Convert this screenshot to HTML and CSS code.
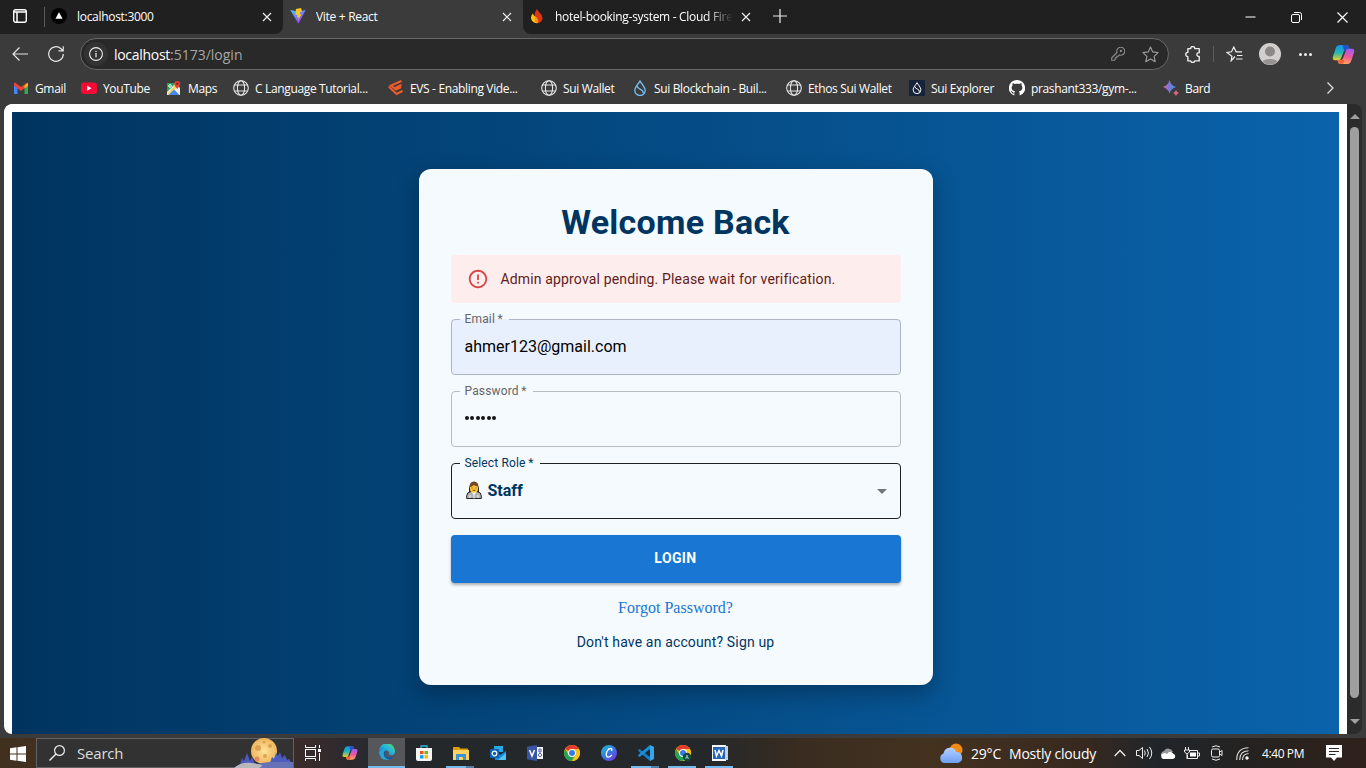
FILE: index.html
```html
<!DOCTYPE html>
<html lang="en">
<head>
<meta charset="utf-8">
<title>Vite + React</title>
<link rel="stylesheet" href="styles.css">
</head>
<body>
<svg class="defs" width="0" height="0">
  <defs>
    <linearGradient id="cpA" x1="0" y1="0" x2="0" y2="1"><stop offset="0" stop-color="#1793ea"/><stop offset=".5" stop-color="#21b7b6"/><stop offset="1" stop-color="#e9cf22"/></linearGradient>
    <linearGradient id="cpB" x1=".6" y1="0" x2=".4" y2="1"><stop offset="0" stop-color="#a05cf0"/><stop offset=".5" stop-color="#ee5799"/><stop offset="1" stop-color="#ffa85a"/></linearGradient>
    <linearGradient id="vite" x1="0" y1="0" x2=".7" y2="1"><stop offset="0" stop-color="#41d1ff"/><stop offset="1" stop-color="#a82dfa"/></linearGradient>
    <linearGradient id="bard"><stop offset="0" stop-color="#e0708a"/><stop offset=".4" stop-color="#8c70d8"/><stop offset="1" stop-color="#239dec"/></linearGradient>
    <linearGradient id="edge" x1="1" y1="0" x2="0" y2="1"><stop offset="0" stop-color="#62df54"/><stop offset=".45" stop-color="#25b8db"/><stop offset="1" stop-color="#1565bd"/></linearGradient>
    <linearGradient id="canva" x1="0" y1="0" x2="1" y2="1"><stop offset="0" stop-color="#17c4cf"/><stop offset=".5" stop-color="#3977e4"/><stop offset="1" stop-color="#822ce4"/></linearGradient>
    <linearGradient id="cloud" x1="0" y1="0" x2="0" y2="1"><stop offset="0" stop-color="#b4d0ff"/><stop offset="1" stop-color="#6d9ff2"/></linearGradient>
    <radialGradient id="moon"><stop offset="0" stop-color="#ffe39a"/><stop offset="1" stop-color="#eeb75c"/></radialGradient>
    <symbol id="globe" viewBox="0 0 16 16"><g fill="none" stroke="#e6e6e6" stroke-width="1.1"><circle cx="8" cy="8" r="7.3"/><ellipse cx="8" cy="8" rx="3.6" ry="7.3"/><path d="M1.5 5h13M1.5 11h13"/></g></symbol>
    <symbol id="x" viewBox="0 0 10 10"><path d="M1 1l8 8M9 1l-8 8" stroke="#eee" stroke-width="1.2"/></symbol>
    <symbol id="copilot" viewBox="0 0 24 22"><path d="M9 1h6q2 0 2.600 2l.6 2h-3q-2 0-2.700 2.200L9.500 15Q8.800 17 7 17H3Q0 17 1 13L4 4Q5 1 9 1z" fill="url(#cpA)"/><path d="M11 1h4q2 0 2.600 2l.9 3h-3q-2 0-2.700 2Z" fill="#1f54cc"/><path d="M15 21H9q-2 0-2.600-2l-.6-2h3q2 0 2.700-2.200L14.500 7Q15.200 5 17 5h4q3 0 2 4l-3 9q-1 3-5 3z" fill="url(#cpB)"/><path d="M9 21q-2 0-2.600-2l-.6-2h3q2 0 2.500-1.500L13 18q-1 3-4 3z" fill="#f4643a"/></symbol>
    <symbol id="chrome" viewBox="0 0 16 16"><circle cx="8" cy="8" r="8" fill="#fbc116"/><path d="M8 8L1.100 4A8 8 0 0 1 14.900 4z" fill="#e33b2e"/><path d="M1.100 4A8 8 0 0 0 8 16l3.400-6L8 8 4.600 10z" fill="#23a455"/><path d="M8 4h6.900A8 8 0 0 1 8 16l3.500-6z" fill="#fbc116"/><circle cx="8" cy="8" r="3.900" fill="#fff"/><circle cx="8" cy="8" r="3" fill="#347bea"/></symbol>
    <symbol id="drop" viewBox="0 0 16 16"><g fill="none" stroke="currentColor" stroke-width="1.300"><path d="M8 .9C9 3.200 13.200 7 13.200 10.400A5.200 5.200 0 0 1 8 15.500a5.200 5.200 0 0 1-5.200-5.100C2.800 7 7 3.200 8 .9z"/><path d="M5.200 6.100c0 3.700 6.500 2.500 6 7"/></g></symbol>
  </defs>
</svg>

<header class="tabs">
  <svg class="workspace" viewBox="0 0 14 14"><rect x=".7" y=".7" width="12.600" height="12.600" rx="2" fill="none" stroke="#fff" stroke-width="1.400"/><path d="M1 3h12M4 3v10" stroke="#fff" stroke-width="1.500"/></svg>
  <div class="tab first">
    <svg class="fav" viewBox="0 0 16 16"><circle cx="8" cy="8" r="8" fill="#000"/><path d="M8 4.300l3.600 6.400H4.400z" fill="#fff"/></svg>
    <span class="tab-title">localhost:3000</span><svg class="close"><use href="#x"/></svg>
  </div>
  <div class="tab active">
    <svg class="fav" viewBox="0 0 16 16"><path d="M.3 2L8.400 15.800 15.700 2 8 3.500z" fill="url(#vite)"/><path d="M11 0L5.900 1l-.4 6 2-.4-.5 3 1.700-.5-.7 3.300 3.600-6.300-2 .3.600-2.500 2-.4z" fill="#ffc61c"/></svg>
    <span class="tab-title">Vite + React</span><svg class="close"><use href="#x"/></svg>
  </div>
  <div class="tab third">
    <svg class="fav" viewBox="0 0 16 16"><path d="M8 1q1 2 2.500 3.500Q13.500 7 13.500 10A5.300 5.300 0 0 1 8 15.300Q5 15 6 8 5 5 8 1z" fill="#df3510"/><path d="M3.700 5.500q-3 4-.6 7.500Q5.200 15.700 9 15q-4-1-2.500-6Q5 7.500 3.700 5.500z" fill="#ffc20e"/><path d="M6.300 8.200q4 3 2.700 6.700-4-1-2.700-6.700z" fill="#ff9308"/></svg>
    <span class="tab-title fade">hotel-booking-system - Cloud Firestore</span><svg class="close"><use href="#x"/></svg>
  </div>
  <svg class="plus" viewBox="0 0 14 14"><path d="M7 0v14M0 7h14" stroke="#eee" stroke-width="1.200"/></svg>
  <div class="window-buttons">
    <svg viewBox="0 0 11 11"><path d="M.5 5h10" stroke="#fff"/></svg>
    <svg viewBox="0 0 11 11"><g fill="none" stroke="#fff"><rect x=".5" y="2.500" width="8" height="8" rx="1.500"/><path d="M3 .5h5.500a2 2 0 0 1 2 2V8"/></g></svg>
    <svg viewBox="0 0 11 11"><path d="M.5.5l10 10M10.500.5l-10 10" stroke="#fff" stroke-width="1.200"/></svg>
  </div>
</header>

<nav class="toolbar">
  <svg class="back" viewBox="0 0 16 14"><path d="M16 7H1M7.500 .5L1 7l6.500 6.500" fill="none" stroke="#e4e4e4" stroke-width="1.200"/></svg>
  <svg class="reload" viewBox="0 0 16 16"><path d="M15.300 8A7.300 7.300 0 1 1 13 2.700L15 4.500M15.200.3v4.500h-4.700" fill="none" stroke="#e4e4e4" stroke-width="1.200"/></svg>
  <div class="address">
    <span class="info"><svg viewBox="0 0 14 14"><circle cx="7" cy="7" r="6.400" fill="none" stroke="#eee" stroke-width="1.100"/><path d="M7 6v4.200M7 3.700v1.400" stroke="#eee" stroke-width="1.200"/></svg></span>
    <span class="url">localhost<i>:5173/login</i></span>
    <svg class="key" viewBox="0 0 14 14"><g fill="none" stroke="#8c8c8c" stroke-width="1.100"><path d="M6 5.500A4 4 0 1 1 8.500 8L7.300 9.200H5.900v1.600H4.300v1.600L3.400 13.300H.7v-2.500z"/><circle cx="10" cy="4" r=".6"/></g></svg>
    <svg class="star" viewBox="0 0 16 16"><path d="M8 1l2.100 4.600 5 .6-3.700 3.500 1 5L8 12.200l-4.400 2.500 1-5L.9 6.200l5-.6z" fill="none" stroke="#999" stroke-width="1.100" stroke-linejoin="round"/></svg>
  </div>
  <svg class="puzzle" viewBox="0 0 16 16"><path d="M5.300 2.500a2 2 0 0 1 4 0H13.400V6.300a1.800 1.800 0 1 0 0 3.500V14H9.200a2 2 0 0 1-3.900 0H2.700V10a2 2 0 0 1 0-4V2.500z" fill="none" stroke="#eee" stroke-width="1.300" stroke-linejoin="round"/></svg>
  <span class="divider"></span>
  <svg class="favorites" viewBox="0 0 17 16"><path d="M9 10.500l-3.800 4.300.7-4.600L1 6.500l4.500-.7L7.800 1l2.300 4.800H16M11 9.500h5.500M10 13h6.500" fill="none" stroke="#eee" stroke-width="1.200"/></svg>
  <svg class="avatar" viewBox="0 0 22 22"><circle cx="11" cy="11" r="11" fill="#d2d0ce"/><circle cx="11" cy="8.500" r="5" fill="#8c8886"/><path d="M3.800 19c0-4 14.400-4 14.400 0A11 11 0 0 1 3.800 19z" fill="#979391"/></svg>
  <span class="more"><b></b><b></b><b></b></span>
  <svg class="copilot"><use href="#copilot"/></svg>
</nav>

<nav class="bookmarks">
  <span><svg viewBox="0 0 16 16"><path d="M1 14V3l3.500 2.700V14z" fill="#4285f4"/><path d="M15 14V3l-3.500 2.700V14z" fill="#34a853"/><path d="M1 3l1-.6L8 7l6-4.600 1 .8v2.300L8 11 1 5.500z" fill="#ea4335"/><path d="M11.500 5.700L14 3.500l1-.4v3L11.500 8.500z" fill="#fbbc04"/></svg>Gmail</span>
  <span><svg viewBox="0 0 16 16"><rect y="2.500" width="16" height="11.500" rx="3" fill="#f60b37"/><path d="M6.200 5.700l4.300 2.500-4.300 2.500z" fill="#fff"/></svg>YouTube</span>
  <span><svg viewBox="0 0 16 16"><path d="M1 3h9l4 5v7H1z" fill="#f1f1f1"/><path d="M1 3h9L1 12z" fill="#24a35a"/><path d="M1 14L10 4l1 3-8 8z" fill="#f4d65b"/><path d="M2.500 15l5.500-5.500 5.500 5.500z" fill="#4387f1"/><path d="M11.200 9q-3-3-3-5.100a3 3 0 0 1 6 0q0 2.100-3 5.100z" fill="#e34235"/><circle cx="11.200" cy="3.700" r="1.200" fill="#8d211d"/><circle cx="4" cy="6" r="1.300" fill="none" stroke="#fff"/></svg>Maps</span>
  <span><svg><use href="#globe"/></svg>C Language Tutorial...</span>
  <span><svg viewBox="0 0 16 16"><g fill="none" stroke="#f15b2a" stroke-width="2"><path d="M13.500 1L3 5.500l5 4 5-2.500M13.500 5L6 8.500"/><path d="M.8 6.500L8.500 14l6-3"/></g></svg>EVS - Enabling Vide...</span>
  <span><svg><use href="#globe"/></svg>Sui Wallet</span>
  <span class="sui"><svg><use href="#drop"/></svg><em>Sui Blockchain - Buil...</em></span>
  <span><svg><use href="#globe"/></svg>Ethos Sui Wallet</span>
  <span><svg class="navy"><use href="#drop"/></svg>Sui Explorer</span>
  <span><svg viewBox="0 0 16 16"><path d="M8 0a8 8 0 0 0-2.600 15.600v-2.200c-2.200.5-2.700-.7-2.900-1.500-.2-.4-.6-.9-1-1.100 1.300-.4 1.800 1 2.100 1.300.6.900 1.300.7 1.900.4.100-.5.300-.9.600-1.100C3.500 11 2.600 9.800 2.600 7.600c0-1 .3-1.700.9-2.200-.1-.3-.3-1.100.1-2.100.7-.1 1.500.4 2.100.8 1.500-.4 3.100-.4 4.600 0 .6-.4 1.400-.9 2.100-.8.400 1 .2 1.800.1 2.100.6.500.9 1.200.9 2.200 0 2.200-.9 3.400-3.500 3.800.5.500.7 1.100.7 1.800v2.400A8 8 0 0 0 8 0z" fill="#fff"/></svg>prashant333/gym-...</span>
  <span><svg viewBox="0 0 16 16"><path d="M6.500 0q1.500 5.500 6.500 7-5 1.500-6.500 6.500Q5 8.500 0 7 5 5.500 6.500 0z" fill="url(#bard)"/><path d="M13 10q.8 2.200 3 3-2.200.8-3 3-.8-2.200-3-3 2.200-.8 3-3z" fill="#d96580"/></svg>Bard</span>
  <svg class="chevron" viewBox="0 0 7 12"><path d="M.5.500L6 6 .5 11.500" fill="none" stroke="#ddd" stroke-width="1.300"/></svg>
</nav>

<div class="viewport">
  <main class="page">
    <form class="card">
      <h1>Welcome Back</h1>
      <div class="alert">
        <svg viewBox="0 0 24 24"><path fill="#d84747" d="M11 15h2v2h-2zm0-8h2v6h-2zm.990-5C6.470 2 2 6.480 2 12s4.470 10 9.990 10C17.520 22 22 17.520 22 12S17.520 2 11.990 2M12 20c-4.420 0-8-3.580-8-8s3.580-8 8-8 8 3.580 8 8-3.580 8-8 8"/></svg>
        <span>Admin approval pending. Please wait for verification.</span>
      </div>
      <div class="field email"><label>Email&#8201;*</label><span>ahmer123@gmail.com</span></div>
      <div class="field"><label>Password&#8201;*</label><span class="dots"><b></b><b></b><b></b><b></b><b></b><b></b></span></div>
      <div class="field role"><label>Select Role&#8201;*</label>
        <svg class="person" viewBox="0 0 16 18"><path d="M.7 17.500v-2.700q0-3.500 4-4.100h6.600q4 .6 4 4.100v2.700z" fill="#b3b3b6" stroke="#222" stroke-width="1"/><path d="M5 10.700l3 3 3-3v-2H5z" fill="#fff"/><path d="M3 11q-.3-10 5-10.400Q13.300 1 13 11z" fill="#252525"/><rect x="4" y="3" width="8" height="8.700" rx="3.700" fill="#ffc431"/><path d="M3.600 6q0-5 4.400-5t4.400 5L11 5Q9 5.200 7.800 4 6 5.800 3.600 6z" fill="#75462a"/><path d="M6 6.500v1M10 6.500v1M6.700 9.300h2.600" stroke="#533" stroke-width=".9"/><path d="M8 13v4.500M4 14v3M12 14v3" stroke="#efefef"/></svg>
        <strong>Staff</strong><i class="caret"></i></div>
      <button type="button">LOGIN</button>
      <a class="forgot">Forgot Password?</a>
      <p class="signup">Don't have an account? Sign up</p>
    </form>
  </main>
  <aside class="scrollbar"><i class="up"></i><i class="thumb"></i><i class="down"></i></aside>
</div>

<footer class="taskbar">
  <svg class="start" viewBox="0 0 16 16"><path d="M0 2.300l6.500-1v6.200H0zM7.500 1.200L16 0v7.500H7.500zM0 8.500h6.500v6.200L0 13.700zM7.500 8.500H16V16l-8.500-1.200z" fill="#fff"/></svg>
  <div class="search">
    <svg class="lens" viewBox="0 0 16 16"><circle cx="10.500" cy="5.500" r="4.900" fill="none" stroke="#eee" stroke-width="1.200"/><path d="M7 9L.5 15.500" stroke="#eee" stroke-width="1.400"/></svg>
    <span>Search</span>
    <svg class="scene" viewBox="0 0 60 30"><circle cx="30" cy="13" r="13" fill="url(#moon)"/><g fill="#dda153"><circle cx="24" cy="10" r="3"/><circle cx="36" cy="8" r="2"/><circle cx="31" cy="18" r="2"/><circle cx="30" cy="4" r="1.500"/><circle cx="23" cy="21" r="2.500" fill="#e58a67"/></g><path d="M6 27l2-7 2 3 3-8 3 8 2-4 4 9zM36 25l2-6 2 2 2-6 2 3 2-4 2 6 3-3 2 5 2-1 3 5z" fill="#4c5bc0"/><path d="M0 30q9-8 23-4 12-3 36-2v6z" fill="#6572b6"/><path d="M0 30q9-8 23-4 9 1 2 4z" fill="#b9b9bd"/></svg>
  </div>
  <div class="apps">
    <span><svg viewBox="0 0 16 16"><g fill="none" stroke="#fff"><path d="M.5 0v2.500h10V0M.5 16v-2.500h10V16"/><rect x=".5" y="4.500" width="10" height="7"/><path d="M14.500 0v3M14.500 8v8"/></g><path d="M13 4h3v3h-3z" fill="#fff"/></svg></span>
    <span><svg><use href="#copilot"/></svg></span>
    <span class="current"><svg viewBox="0 0 16 16"><path d="M0 8A8 8 0 0 1 16 6.500c.5 4-3 5.500-5.500 4.500-1.500-.7-.2-1.300-.5-2.800C9.500 6 4 5 0 9z" fill="url(#edge)"/><path d="M0 8q4-4 8-2-3 1-3 4 0 4.500 6 5.300Q1 18 0 8z" fill="#2aa3d8"/><path d="M7.500 6q-3 1-2.800 4 .5 5 6.300 5.400 2.500-1 3.500-3-8 2.500-8.500-3 0-2 1.500-3.400z" fill="#1559a4"/></svg></span>
    <span><svg viewBox="0 0 16 16"><path d="M5 4V1h6v3" fill="none" stroke="#35aee4" stroke-width="1.300"/><path d="M0 3h16v11q0 2-2 2H2q-2 0-2-2z" fill="#f5f5f5"/><path d="M4 6h3.500v3.200H4z" fill="#f15123"/><path d="M8.500 6H12v3.200H8.500z" fill="#7eb900"/><path d="M4 10.200h3.500v3.300H4z" fill="#00a3ee"/><path d="M8.500 10.200H12v3.300H8.500z" fill="#ffb800"/></svg></span>
    <span class="open stack"><svg viewBox="0 0 16 16"><path d="M0 2h6l1.500 1.500H15V7H0z" fill="#dd9b09"/><path d="M0 5h16v10H0z" fill="#ffd45d"/><path d="M3 15V9h10v6h-3v-3H6v3z" fill="#3d92d8"/></svg></span>
    <span><svg viewBox="0 0 16 16"><path d="M4 1h9v6H4z" fill="#27a9e8"/><path d="M4 6l6 4 6-4v8q0 1-1 1H5z" fill="#1688db"/><path d="M8 15l8-7v6q0 1-1 1z" fill="#53c4f5"/><rect y="4" width="9" height="9" rx="1" fill="#0763b6"/><circle cx="4.500" cy="8.500" r="2.300" fill="none" stroke="#fff" stroke-width="1.200"/></svg></span>
    <span><svg viewBox="0 0 16 16"><path d="M8 2h8v12H8z" fill="#f4f4fa"/><path d="M0 1.700L10 0v16L0 14.300z" fill="#3855a4"/><path d="M2.500 5L5 11l2.500-6" fill="none" stroke="#fff" stroke-width="1.500"/><path d="M12 4h2v3h-2zM11 10l2-2 2 2-2 2z" fill="none" stroke="#5262a8"/></svg></span>
    <span><svg><use href="#chrome"/></svg></span>
    <span><svg viewBox="0 0 16 16"><circle cx="8" cy="8" r="8" fill="url(#canva)"/><path d="M10.500 6q1-2.500-.8-2.500C6.500 3.500 5 8 5.300 10.200c.4 2.800 3.700 2.500 5.500-.3" fill="none" stroke="#fff" stroke-width="1.300"/></svg></span>
    <span class="open stack"><svg viewBox="0 0 16 16"><path d="M0 5.200L1.500 4 12 12v4L1 6.700z" fill="#147dc9"/><path d="M0 10.800L1.500 12 12 4V0L1 9.300z" fill="#1690df"/><path d="M12 0l4 2v12l-4 2z" fill="#35a7ef"/></svg></span>
    <span class="open"><svg viewBox="0 0 16 16"><use href="#chrome"/><circle cx="12" cy="12" r="4.200" fill="#10483b"/><path d="M10.500 14L12 10l1.500 4M11 12.800h2" fill="none" stroke="#bde0d4" stroke-width=".7"/></svg></span>
    <span class="open"><svg viewBox="0 0 16 16"><path d="M0 0h14v16H0z" fill="#f4f7fb"/><path d="M13 1h3v14h-3z" fill="#bfd3ed"/><path d="M1 2h12v12H1z" fill="#2765b5"/><path d="M3 5l1.500 6L7 5.500 9.500 11 11 5" fill="none" stroke="#fff" stroke-width="1.500"/></svg></span>
  </div>
  <div class="tray">
    <svg class="weather" viewBox="0 0 25 20"><circle cx="17" cy="7" r="6.500" fill="#f38c14"/><path d="M5 20a5 5 0 0 1-.5-9.500A6.800 6.800 0 0 1 17.500 9 5.600 5.600 0 0 1 19 20z" fill="url(#cloud)"/></svg>
    <span class="temp">29°C</span><span class="sky">Mostly cloudy</span>
    <svg class="up-arrow" viewBox="0 0 12 8"><path d="M.7 7L6 1.500 11.300 7" fill="none" stroke="#eee" stroke-width="1.300"/></svg>
    <svg class="sound" viewBox="0 0 17 14"><g fill="none" stroke="#eee"><path d="M.5 4.500h2.500L6.500 1.500v11L3 9.500H.5zM8.500 4.500q1.500 2.500 0 5M11 3q3 4 0 8M13.500 1q4.500 6 0 12"/></g></svg>
    <svg class="onedrive" viewBox="0 0 16 11"><path d="M1 8a4 4 0 0 1 3-5 5 5 0 0 1 9 1z" fill="#999"/><path d="M3 11a3 3 0 0 1 0-5.500q2-1 4 .5 3-4 6-.5a2.800 2.800 0 0 1 0 5.500z" fill="#fff"/></svg>
    <svg class="battery" viewBox="0 0 16 12"><g fill="none" stroke="#eee"><path d="M6 3.500h7.500v8h-10V8M14 6h1.500v3H14M1.500 0v3M4.500 0v3M.5 3h5v2l-2.500 2L.5 5zM3 7v5"/></g><path d="M6 5.500h6v4H6z" fill="#fff"/></svg>
    <svg class="meet" viewBox="0 0 12 16"><g fill="none" stroke="#eee"><rect x=".5" y="4" width="8" height="8" rx="1.500"/><path d="M8.500 7l2.500-1.500v5L8.500 9M1 2q4-2.500 8 0M1 14q4 2.500 8 0"/></g></svg>
    <svg class="wifi" viewBox="0 0 13 13"><g fill="none" stroke="#ddd" stroke-width="1.100"><path d="M.7 13Q.7 1 12.500.7M3.700 13Q3.700 4 12.500 3.700M6.500 13Q6.500 7 12.500 6.500"/></g><circle cx="11" cy="11" r="1.700" fill="#fff"/></svg>
    <span class="clock">4:40 PM</span>
    <svg class="notice" viewBox="0 0 16 16"><path d="M0 0h16v12.500h-5L8 16l-3-3.500H0z" fill="#fff"/><path d="M3 3.500h10M3 6.500h10M3 9.500h6.500" stroke="#302620"/></svg>
  </div>
</footer>
</body>
</html>
```
FILE: styles.css
```css
* { box-sizing: border-box; }
body { margin: 0; width: 1366px; height: 768px; overflow: hidden; background: #3b3b3b; color: #fff; font-family: "Open Sans", "Noto Sans", sans-serif; font-size: 12px; display: flex; flex-direction: column; }
svg { display: block; flex: none; }
.defs { position: absolute; }

.tabs { height: 34px; flex: none; display: flex; align-items: center; background: #3b3b3b; position: relative; }
.tabs::before { content: ""; position: absolute; inset: 0 1083px 0 0; background: #202020; border-bottom-right-radius: 8px; }
.workspace { width: 14px; height: 14px; margin: -2px 0 0 13px; position: relative; }
.tab { height: 34px; display: flex; align-items: center; position: relative; padding-bottom: 2px; letter-spacing: -.3px; }
.first { width: 239px; margin-left: 17px; padding-left: 7px; }
.first::before { content: ""; width: 1px; height: 20px; background: #5a5a5a; position: absolute; left: 0; top: 7px; }
.active { width: 240px; background: #3b3b3b; border-radius: 8px 8px 0 0; padding-left: 7px; }
.third { width: 239px; background: #202020; border-bottom-left-radius: 8px; padding-left: 6px; }
.fav { width: 16px; height: 16px; margin-right: 10px; }
.third .fav { margin-right: 10px; }
.tab-title { flex: 1; white-space: nowrap; overflow: hidden; }
.fade { -webkit-mask-image: linear-gradient(90deg, #000 85%, transparent); mask-image: linear-gradient(90deg, #000 85%, transparent); }
.close { width: 10px; height: 10px; margin: 2px 11px 0 8px; }
.plus { width: 14px; height: 14px; padding: 0; }
.tabs .plus { box-sizing: content-box; padding: 9px 0 11px 11px; background: #202020; border-left: 0; }
.window-buttons { flex: 1; height: 34px; background: #202020; display: flex; align-items: center; justify-content: flex-end; gap: 35px; padding-right: 18px; }
.window-buttons svg { width: 11px; height: 11px; }

.toolbar { height: 40px; flex: none; display: flex; align-items: center; }
.back { width: 16px; height: 14px; margin-left: 12px; }
.reload { width: 16px; height: 16px; margin-left: 20px; }
.address { width: 1089px; height: 32px; margin-left: 16px; border: 1px solid #686868; border-radius: 16px; background: #292929; display: flex; align-items: center; }
.info { width: 24px; height: 24px; border-radius: 50%; background: #333; margin-left: 3px; display: grid; place-items: center; }
.info svg { width: 14px; height: 14px; }
.url { flex: 1; margin-left: 6px; font-size: 14px; letter-spacing: -.3px; }
.url i { color: #a6a6a6; font-style: normal; letter-spacing: 0; }
.key { width: 14px; height: 14px; margin-right: 17px; }
.star { width: 17px; height: 17px; margin-right: 9px; }
.puzzle { width: 17px; height: 17px; margin-left: 16px; }
.divider { width: 1px; height: 16px; background: #5c5c5c; margin-left: 11px; }
.favorites { width: 17px; height: 16px; margin-left: 12px; }
.avatar { width: 22px; height: 22px; margin-left: 16px; }
.more { display: flex; gap: 2px; margin-left: 18px; }
.more b { width: 3px; height: 3px; border-radius: 50%; background: #eee; }
.toolbar .copilot { width: 23px; height: 21px; margin-left: 20px; }

.bookmarks { height: 30px; flex: none; display: grid; grid-template-columns: 68px 85px 67px 155px 153px 91px 154px 123px 100px 154px 164px 7px; align-items: center; padding: 0 0 2px 13px; letter-spacing: -.35px; }
.bookmarks > span { display: flex; align-items: center; gap: 6px; white-space: nowrap; }
.bookmarks > span svg { width: 16px; height: 16px; }
.sui { color: #73bdf0; }
.sui em { color: #fff; font-style: normal; }
.navy { background: #172338; padding: 2px; }
.chevron { width: 7px; height: 12px; }

.viewport { height: 630px; flex: none; display: flex; margin-left: 4px; width: 1358px; background: #2b2b2b; border-radius: 8px; overflow: hidden; }
.page { width: 1343px; border: solid #fff; border-width: 8px 8px 0; background: linear-gradient(to right, #00345f, #0a63ab) padding-box; border-top-left-radius: 8px; display: flex; justify-content: center; align-items: flex-start; padding-top: 57px; }
.scrollbar { width: 15px; display: flex; flex-direction: column; align-items: center; }
.scrollbar i { display: block; }
.up { border: solid transparent; border-width: 0 5px 5px; border-bottom-color: #9f9f9f; margin-top: 10px; }
.thumb { width: 9px; height: 571px; border-radius: 5px; background: #9f9f9f; margin-top: 8px; }
.down { border: solid transparent; border-width: 5px 5px 0; border-top-color: #9f9f9f; margin-top: 21px; }

.card { width: 514px; height: 516px; padding: 32px; border-radius: 12px; background: #f5faff; box-shadow: 0 8px 24px rgba(0,0,0,.3); font-family: Roboto, sans-serif; color: #003366; display: flex; flex-direction: column; }
h1 { margin: 0 0 12px; font-size: 34px; line-height: 42px; text-align: center; font-weight: 700; letter-spacing: .25px; color: #00355f; }
.alert { height: 48px; flex: none; border-radius: 4px; background: #fdeded; display: flex; align-items: center; padding-left: 16px; color: #5f2120; font-size: 14px; letter-spacing: .15px; }
.alert svg { width: 22px; height: 22px; margin-right: 12px; }
.alert span { padding-bottom: 1px; }
.field { position: relative; height: 56px; flex: none; margin-top: 16px; border: 1px solid #b9bdc1; border-radius: 4px; display: flex; align-items: center; padding: 0 13px; font-size: 16px; --fill: #f5faff; background: var(--fill); color: #111; }
.field > span, .field strong { padding-bottom: 2px; }
.field label { position: absolute; left: 8px; top: -9px; padding: 0 6px 0 5px; font-size: 12px; line-height: 16px; letter-spacing: .15px; color: #666; background: linear-gradient(var(--fill), var(--fill)) 0 8px / 100% 1px no-repeat; }
.email { --fill: #e8f0fe; border-color: #aeb5c5; }
.email > span { color: #000; }
.dots { display: flex; gap: 1.500px; }
.dots b { width: 4px; height: 4px; border-radius: 50%; background: #151515; }
.role { border-color: #1f1f1f; }
.role label, .role strong { color: #00355f; }
.person { width: 16px; height: 18px; margin: -2px 6px 0 1px; }
.caret { border: solid transparent; border-width: 5px 5px 0; border-top-color: #70757a; margin-left: auto; }
button { height: 48px; flex: none; margin-top: 16px; border: 0; border-radius: 4px; background: #1976d2; color: #fff; font: 700 14px Roboto, sans-serif; letter-spacing: .4px; padding: 0 0 2px; box-shadow: 0 2px 3px rgba(0,0,0,.3); }
.forgot { margin-top: 16px; line-height: 18px; text-align: center; color: #1976d2; font-family: "Liberation Serif", serif; font-size: 16px; }
.signup { margin: 15px 0 0; line-height: 20px; text-align: center; font-size: 14px; letter-spacing: .15px; color: #00355f; }

.taskbar { height: 30px; flex: none; margin-top: 4px; display: flex; align-items: center; background: linear-gradient(90deg, #42301f 0, #3c2b29 290px, #292a30 365px, #24282a 410px, #25282a 710px, #392c20 800px, #44321f 930px, #38291f 1080px, #20252a 1160px, #25221f 1260px, #30211c 1366px); }
.start { width: 16px; height: 16px; margin: 1px 10px 0; }
.search { width: 258px; height: 30px; border: 1px solid #626262; background: #323232; display: flex; align-items: center; padding-left: 12px; font-size: 15px; color: #ddd; letter-spacing: -.2px; }
.lens { width: 16px; height: 16px; margin-right: 12px; }
.search span { flex: 1; }
.scene { width: 60px; height: 30px; margin-right: -1px; }
.apps { display: flex; height: 30px; }
.apps span { width: 37px; height: 30px; display: grid; place-items: center; position: relative; }
.apps svg { width: 16px; height: 16px; }
.apps .current { background: #55575a; border-bottom: 2px solid #76b9ed; }
.apps .open::after { content: ""; position: absolute; left: 4px; right: 5px; bottom: 0; height: 2px; background: #76b9ed; }
.apps .stack::after { background: linear-gradient(90deg, #76b9ed 70%, #527fa3 70%); }
.tray { display: flex; align-items: center; flex: 1; }
.weather { width: 25px; height: 20px; margin-left: 201px; }
.temp, .sky { font-size: 14px; letter-spacing: -.2px; white-space: nowrap; }
.temp { width: 38px; margin-left: 7px; }
.sky { width: 87px; }
.up-arrow { width: 12px; height: 8px; margin-left: 18px; }
.sound { width: 17px; height: 14px; margin-left: 10px; }
.onedrive { width: 16px; height: 11px; margin-left: 7px; }
.battery { width: 16px; height: 12px; margin-left: 8px; }
.meet { width: 12px; height: 16px; margin-left: 11px; }
.wifi { width: 13px; height: 13px; margin-left: 13px; }
.clock { width: 43px; margin-left: 13px; letter-spacing: -.4px; white-space: nowrap; }
.notice { width: 16px; height: 16px; margin-left: 21px; }
```
